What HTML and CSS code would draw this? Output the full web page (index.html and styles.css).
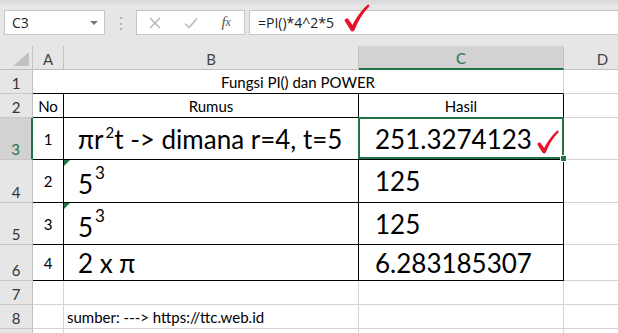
FILE: index.html
```html
<!DOCTYPE html>
<html>
<head>
  <title>Fungsi PI() dan POWER</title>
  <link rel="stylesheet" href="styles.css">
</head>
<body>
  <!-- Formula bar -->
  <div class="formulaBar">
    <div class="nameBox"><span>C3</span><span class="caret"></span></div>
    <div class="grip">&#8942;</div>
    <div class="fxGroup">
      <div class="fxBtn">
        <svg width="12" height="12" viewBox="0 0 12 12"><path d="M1 1L11 11M11 1L1 11" stroke="#b3b3b3" stroke-width="1.4" fill="none"/></svg>
      </div>
      <div class="fxBtn">
        <svg width="14" height="12" viewBox="0 0 14 12"><path d="M1 6.5L5 10.5L13 1.5" stroke="#bcbcbc" stroke-width="1.6" fill="none"/></svg>
      </div>
      <div class="fxBtn fxText">f<span>x</span></div>
    </div>
    <div class="formulaInput">
      <span>=PI()*4^2*5</span>
      <svg class="tick tickBar" width="26" height="28" viewBox="0 0 26 28"><path d="M0.5 16.5C1.5 14 4 14 5 16L8.5 21C13 12 18 6 23.5 0.8C25 0 26 1.5 25 2.8C19 9 14 17 10.5 26C9.8 27.8 7.5 28 6.5 26.3Z" fill="#e8122a"/></svg>
    </div>
  </div>

  <!-- Sheet -->
  <div class="sheet">
    <div class="c hd corner"></div>
    <div class="c hd">A</div>
    <div class="c hd">B</div>
    <div class="c hd sel">C</div>
    <div class="c hd">D</div>

    <div class="c rh">1</div>
    <div class="c merged">Fungsi PI() dan POWER</div>
    <div class="c"></div>

    <div class="c rh">2</div>
    <div class="c tb mid">No</div>
    <div class="c tb mid">Rumus</div>
    <div class="c tb mid">Hasil</div>
    <div class="c"></div>

    <div class="c rh sel">3</div>
    <div class="c tb mid">1</div>
    <div class="c tb big"><span>&pi;r<sup>2</sup>t -&gt; dimana r=4, t=5</span></div>
    <div class="c tb big res active">251.3274123
      <svg class="tick tickCell" width="26" height="24" viewBox="0 0 26 28"><path d="M0.5 16.5C1.5 14 4 14 5 16L8.5 21C13 12 18 6 23.5 0.8C25 0 26 1.5 25 2.8C19 9 14 17 10.5 26C9.8 27.8 7.5 28 6.5 26.3Z" fill="#e8122a"/></svg>
    </div>
    <div class="c"></div>

    <div class="c rh">4</div>
    <div class="c tb mid">2</div>
    <div class="c tb big flag"><span class="pow">5<sup>3</sup></span></div>
    <div class="c tb big res">125</div>
    <div class="c"></div>

    <div class="c rh">5</div>
    <div class="c tb mid">3</div>
    <div class="c tb big flag"><span class="pow">5<sup>3</sup></span></div>
    <div class="c tb big res">125</div>
    <div class="c"></div>

    <div class="c rh">6</div>
    <div class="c tb mid">4</div>
    <div class="c tb big">2 x &pi;</div>
    <div class="c tb big res">6.283185307</div>
    <div class="c"></div>

    <div class="c rh">7</div>
    <div class="c"></div>
    <div class="c"></div>
    <div class="c"></div>
    <div class="c"></div>

    <div class="c rh">8</div>
    <div class="c"></div>
    <div class="c note">sumber: ---&gt; https://ttc.web.id</div>
    <div class="c"></div>
    <div class="c"></div>

    <div class="c rh"></div>
    <div class="c"></div>
    <div class="c"></div>
    <div class="c"></div>
    <div class="c"></div>
  </div>
</body>
</html>
```

FILE: styles.css
```css
body {
  margin: 0;
  width: 618px;
  height: 333px;
  overflow: hidden;
  background: #fff;
  font-family: Lato, "Liberation Sans", sans-serif;
}
/* Formula bar */
.formulaBar {
  height: 46px;
  box-sizing: border-box;
  padding: 10px 0 0 4px;
  display: flex;
  align-items: flex-start;
  background: linear-gradient(#d9d9d9, #e6e6e6 6px);
}
.nameBox {
  width: 101px;
  height: 25px;
  box-sizing: border-box;
  border: 1px solid #c6c6c6;
  background: #fff;
  display: flex;
  align-items: center;
  justify-content: space-between;
  padding: 0 6px 0 7px;
  font-family: "Open Sans", sans-serif;
  font-size: 14px;
  color: #222;
}
.caret {
  width: 0;
  height: 0;
  border-top: 4px solid #7a7a7a;
  border-left: 4px solid transparent;
  border-right: 4px solid transparent;
}
.grip {
  width: 31px;
  height: 25px;
  line-height: 25px;
  text-align: center;
  color: #a6a6a6;
  font-size: 16px;
}
.fxGroup {
  width: 109px;
  height: 25px;
  box-sizing: border-box;
  border: 1px solid #c6c6c6;
  background: #fff;
  display: flex;
  align-items: center;
}
.fxBtn {
  width: 36px;
  display: flex;
  justify-content: center;
  align-items: center;
}
.fxText {
  font-family: "Liberation Serif", serif;
  font-style: italic;
  font-size: 15px;
  color: #555;
}
.fxText span { font-size: 12px; }
.formulaInput {
  position: relative;
  flex: 1;
  height: 25px;
  margin-left: 4px;
  box-sizing: border-box;
  border: 1px solid #c6c6c6;
  border-right: none;
  background: #fff;
  display: flex;
  align-items: center;
  padding-left: 8px;
  font-family: "Open Sans", sans-serif;
  font-size: 14px;
  color: #222;
}
.tick { position: absolute; }
.tickBar { left: 94px; top: -7px; }
.tickCell { left: 176px; top: 12px; }

/* Sheet grid */
.sheet {
  display: grid;
  grid-template-columns: 33px 31px 295px 205px 78px;
  grid-template-rows: 24px 24px 24px 42px 43px 42px 36px 24px 24px 24px;
}
.c {
  position: relative;
  box-sizing: border-box;
  border-right: 1px solid #d4d4d4;
  border-bottom: 1px solid #d4d4d4;
  display: flex;
  align-items: center;
  font-size: 15px;
  white-space: nowrap;
  color: #000;
}
.hd {
  background: #e6e6e6;
  border-right-color: #c3c3c3;
  border-bottom-color: #bfbfbf;
  justify-content: center;
  color: #444;
  padding-top: 2px;
}
.hd.sel {
  background: #d2d2d2;
  color: #217346;
  border-bottom: 2px solid #217346;
}
.corner::after {
  content: "";
  position: absolute;
  right: 3px;
  bottom: 3px;
  width: 0;
  height: 0;
  border-bottom: 14px solid #c2c2c2;
  border-left: 16px solid transparent;
}
.rh {
  background: #e6e6e6;
  border-right-color: #bfbfbf;
  border-bottom-color: #c8c8c8;
  justify-content: center;
  align-items: flex-end;
  padding-bottom: 1px;
  color: #333;
}
.rh.sel {
  background: #d2d2d2;
  color: #217346;
  border-right: 2px solid #217346;
}
.merged {
  grid-column: span 3;
  justify-content: center;
  border-bottom-color: #000;
}
.tb {
  border-right-color: #000;
  border-bottom-color: #000;
}
.mid { justify-content: center; }
.big {
  font-size: 26px;
  padding-left: 14px;
}
.res { padding-left: 16px; }
.big sup {
  font-size: 15px;
  line-height: 0;
  vertical-align: 11px;
  margin-left: 2px;
}
.pow { padding-top: 6px; }
.big .pow sup {
  font-size: 17px;
  vertical-align: 15px;
}
.flag::before {
  content: "";
  position: absolute;
  left: 0;
  top: 0;
  border-top: 6px solid #217346;
  border-right: 6px solid transparent;
}
.active::after {
  content: "";
  position: absolute;
  left: -1px;
  top: -1px;
  right: -1px;
  bottom: 0;
  border: 2px solid #217346;
}
.active::before {
  content: "";
  position: absolute;
  right: -4px;
  bottom: -3px;
  width: 5px;
  height: 5px;
  background: #217346;
  border: 1px solid #fff;
  z-index: 1;
}
.note {
  padding-left: 3px;
  overflow: visible;
}
```
